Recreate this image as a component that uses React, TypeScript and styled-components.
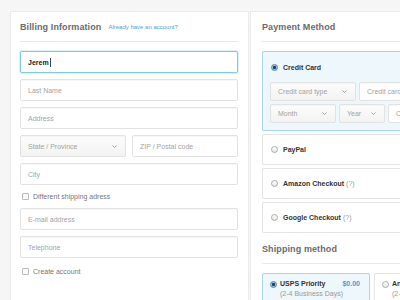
import React from 'react';
import styled, { createGlobalStyle } from 'styled-components';

const GlobalStyle = createGlobalStyle`
  body {
    margin: 0;
    background: #f6f6f6;
    overflow: hidden;
    font-family: 'Liberation Sans', Arial, sans-serif;
  }
`;

const Page = styled.div`
  display: flex;
  gap: 1px;
  padding: 11px 0 0 10px;
  width: 460px;
`;

const Card = styled.section<{ $width: number }>`
  flex: none;
  width: ${(p) => p.$width}px;
  min-height: 320px;
  box-sizing: border-box;
  background: #fff;
  border: 1px solid #ebebeb;
  padding: 0 10px 0 9px;
`;

const CardHeader = styled.div`
  height: 29px;
  display: flex;
  align-items: center;
  gap: 7px;
  border-bottom: 1px solid #e9e9e9;
  margin-bottom: 9px;
`;

const Title = styled.h2`
  margin: 0;
  font-size: 9px;
  font-weight: 700;
  color: #6b6b6b;
  letter-spacing: 0.1px;
`;

const HeaderLink = styled.a`
  font-size: 6px;
  color: #45a7cf;
  text-decoration: none;
  margin-top: 1px;
`;

const Form = styled.div`
  display: flex;
  flex-direction: column;
  gap: 6px;
`;

const Field = styled.div<{ $focused?: boolean; $height?: number; $select?: boolean }>`
  height: ${(p) => p.$height ?? 22}px;
  box-sizing: border-box;
  display: flex;
  align-items: center;
  justify-content: space-between;
  padding: 0 8px 0 7px;
  border: 1px solid ${(p) => (p.$focused ? '#7fcce0' : '#e2e2e2')};
  border-radius: 2px;
  background: ${(p) =>
    p.$select ? 'linear-gradient(180deg, #fcfcfc 0%, #f3f3f3 100%)' : '#fff'};
  box-shadow: ${(p) =>
    p.$focused ? '0 0 0 1px rgba(127, 204, 224, 0.3)' : 'inset 0 1px 1px rgba(0,0,0,0.03)'};
  font-size: 7px;
  color: #a3a3a3;
  white-space: nowrap;
  overflow: hidden;
  min-width: 0;
`;

const Value = styled.span`
  color: #222;
  font-weight: 700;
  display: flex;
  align-items: center;
`;

const Caret = styled.span`
  display: inline-block;
  width: 1px;
  height: 9px;
  margin-left: 1px;
  background: #444;
`;

const Pair = styled.div`
  display: grid;
  grid-template-columns: 1fr 1fr;
  gap: 6px;
`;

const CheckRow = styled.label<{ $offset?: number }>`
  height: 11px;
  margin-top: ${(p) => p.$offset ?? 0}px;
  display: flex;
  align-items: center;
  gap: 4px;
  padding-left: 2px;
  font-size: 7px;
  color: #777;
`;

const Checkbox = styled.span`
  width: 5px;
  height: 5px;
  border: 1px solid #bbb;
  background: #fafafa;
  border-radius: 1px;
`;

const RightCard = styled(Card)`
  padding: 0 0 0 11px;
`;

const Methods = styled.div`
  display: flex;
  flex-direction: column;
  gap: 3px;
`;

const MethodBox = styled.div<{ $active?: boolean; $height: number }>`
  height: ${(p) => p.$height}px;
  box-sizing: border-box;
  border: 1px solid ${(p) => (p.$active ? '#a7d7e8' : '#e4e4e4')};
  border-right: none;
  border-radius: 2px 0 0 2px;
  background: ${(p) => (p.$active ? '#eef7fb' : '#fff')};
  padding: ${(p) => (p.$active ? '8px 0 0 7px' : '0 0 0 7px')};
  display: flex;
  flex-direction: column;
  justify-content: ${(p) => (p.$active ? 'flex-start' : 'center')};
`;

const MethodTitle = styled.div`
  height: 14px;
  display: flex;
  align-items: center;
  gap: 5px;
  font-size: 7px;
  font-weight: 700;
  color: #333;
`;

const Hint = styled.span`
  font-weight: 400;
  color: #999;
  margin-left: -3px;
`;

const Radio = styled.span<{ $checked?: boolean }>`
  flex: none;
  width: 7px;
  height: 7px;
  box-sizing: border-box;
  border-radius: 50%;
  margin-left: 1px;
  border: 1px solid ${(p) => (p.$checked ? '#5d86ad' : '#ababab')};
  background: ${(p) =>
    p.$checked
      ? 'radial-gradient(circle, #1f3f66 0 1.3px, #8fc3e2 1.8px)'
      : 'linear-gradient(180deg, #fff 0%, #e6e6e6 100%)'};
`;

const CardRows = styled.div`
  margin-top: 8px;
  display: flex;
  flex-direction: column;
  gap: 3px;
`;

const CardRow = styled.div<{ $cols: string }>`
  display: grid;
  grid-template-columns: ${(p) => p.$cols};
  gap: 3px;
`;

const SectionHeader = styled(CardHeader)`
  margin-top: 1px;
  margin-bottom: 9px;
`;

const Shipping = styled.div`
  display: flex;
  gap: 4px;
`;

const ShipOption = styled.div<{ $active?: boolean; $width: number }>`
  flex: none;
  width: ${(p) => p.$width}px;
  height: 40px;
  box-sizing: border-box;
  border: 1px solid ${(p) => (p.$active ? '#a7d7e8' : '#e4e4e4')};
  border-radius: 2px;
  background: ${(p) => (p.$active ? '#eef7fb' : '#fff')};
  padding: 5px 9px 0 6px;
  display: grid;
  grid-template-columns: 7px 1fr auto;
  column-gap: 4px;
  align-content: start;
  align-items: center;
  font-size: 7px;
`;

const ShipName = styled.span`
  font-weight: 700;
  color: #333;
  line-height: 10px;
  white-space: nowrap;
`;

const Price = styled.span`
  font-weight: 700;
  color: #3ba3d3;
  line-height: 10px;
`;

const ShipDays = styled.span`
  grid-column: 2 / 4;
  color: #999;
  line-height: 9px;
  white-space: nowrap;
`;

const Chevron = () => (
  <svg width="5" height="3" viewBox="0 0 5 3" fill="none">
    <polyline points="0.5,0.5 2.5,2.5 4.5,0.5" stroke="#8a8a8a" strokeWidth="0.8" />
  </svg>
);

export default function App() {
  return (
    <>
      <GlobalStyle />
      <Page>
        <Card $width={239}>
          <CardHeader>
            <Title>Billing Information</Title>
            <HeaderLink href="#">Already have an account?</HeaderLink>
          </CardHeader>
          <Form>
            <Field $focused>
              <Value>
                Jerem
                <Caret />
              </Value>
            </Field>
            <Field>Last Name</Field>
            <Field>Address</Field>
            <Pair>
              <Field $select>
                State / Province
                <Chevron />
              </Field>
              <Field>ZIP / Postal code</Field>
            </Pair>
            <Field>City</Field>
            <CheckRow>
              <Checkbox />
              Different shipping adress
            </CheckRow>
            <Field>E-mail address</Field>
            <Field>Telephone</Field>
            <CheckRow $offset={2}>
              <Checkbox />
              Create account
            </CheckRow>
          </Form>
        </Card>

        <RightCard $width={200}>
          <CardHeader>
            <Title>Payment Method</Title>
          </CardHeader>
          <Methods>
            <MethodBox $active $height={80}>
              <MethodTitle>
                <Radio $checked />
                Credit Card
              </MethodTitle>
              <CardRows>
                <CardRow $cols="86px 80px">
                  <Field $select $height={19}>
                    Credit card type
                    <Chevron />
                  </Field>
                  <Field $height={19}>Credit card number</Field>
                </CardRow>
                <CardRow $cols="66px 46px 40px">
                  <Field $select $height={19}>
                    Month
                    <Chevron />
                  </Field>
                  <Field $select $height={19}>
                    Year
                    <Chevron />
                  </Field>
                  <Field $height={19}>CVC</Field>
                </CardRow>
              </CardRows>
            </MethodBox>
            <MethodBox $height={31}>
              <MethodTitle>
                <Radio />
                PayPal
              </MethodTitle>
            </MethodBox>
            <MethodBox $height={31}>
              <MethodTitle>
                <Radio />
                Amazon Checkout <Hint>(?)</Hint>
              </MethodTitle>
            </MethodBox>
            <MethodBox $height={31}>
              <MethodTitle>
                <Radio />
                Google Checkout <Hint>(?)</Hint>
              </MethodTitle>
            </MethodBox>
          </Methods>
          <SectionHeader>
            <Title>Shipping method</Title>
          </SectionHeader>
          <Shipping>
            <ShipOption $active $width={108}>
              <Radio $checked />
              <ShipName>USPS Priority</ShipName>
              <Price>$0.00</Price>
              <span />
              <ShipDays>(2-4 Business Days)</ShipDays>
            </ShipOption>
            <ShipOption $width={108}>
              <Radio />
              <ShipName>Any Carrier</ShipName>
              <Price>$5.00</Price>
              <span />
              <ShipDays>(2-3 Business Days)</ShipDays>
            </ShipOption>
          </Shipping>
        </RightCard>
      </Page>
    </>
  );
}
